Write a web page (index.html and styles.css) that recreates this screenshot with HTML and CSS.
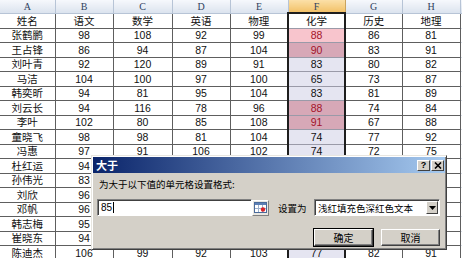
FILE: index.html
```html
<!DOCTYPE html>
<html lang="zh-CN">
<head>
  <meta charset="UTF-8" />
  <title>条件格式 - 大于</title>
  <link rel="stylesheet" href="styles.css">
</head>
<body>

  <table class="sheet">
    <colgroup>
      <col class="w-a"><col class="w-b"><col class="w-c"><col class="w-d"><col class="w-e"><col class="w-f"><col class="w-g"><col class="w-h"><col class="w-i">
    </colgroup>
    <tr class="cols"><th>A</th><th>B</th><th>C</th><th>D</th><th>E</th><th class="on">F</th><th>G</th><th>H</th><th></th></tr>
    <tr><td>姓名</td><td>语文</td><td>数学</td><td>英语</td><td>物理</td><td class="f top">化学</td><td>历史</td><td>地理</td><td class="x"></td></tr>
    <tr><td>张鹤鹏</td><td>98</td><td>108</td><td>92</td><td>99</td><td class="f hi first">88</td><td>86</td><td>81</td><td class="x"></td></tr>
    <tr><td>王占锋</td><td>86</td><td>94</td><td>87</td><td>104</td><td class="f hi">90</td><td>83</td><td>91</td><td class="x"></td></tr>
    <tr><td>刘叶青</td><td>92</td><td>120</td><td>89</td><td>91</td><td class="f">83</td><td>80</td><td>82</td><td class="x"></td></tr>
    <tr><td>马洁</td><td>104</td><td>100</td><td>97</td><td>100</td><td class="f">65</td><td>73</td><td>87</td><td class="x"></td></tr>
    <tr><td>韩奕昕</td><td>94</td><td>81</td><td>95</td><td>104</td><td class="f">83</td><td>81</td><td>89</td><td class="x"></td></tr>
    <tr><td>刘云长</td><td>94</td><td>116</td><td>78</td><td>96</td><td class="f hi">88</td><td>74</td><td>84</td><td class="x"></td></tr>
    <tr><td>李叶</td><td>102</td><td>80</td><td>85</td><td>108</td><td class="f hi">91</td><td>67</td><td>88</td><td class="x"></td></tr>
    <tr><td>童晓飞</td><td>98</td><td>98</td><td>81</td><td>104</td><td class="f">74</td><td>77</td><td>92</td><td class="x"></td></tr>
    <tr><td>冯惠</td><td>97</td><td>91</td><td>106</td><td>102</td><td class="f">74</td><td>72</td><td>75</td><td class="x"></td></tr>
    <tr><td>杜红运</td><td>94</td><td></td><td></td><td></td><td class="f"></td><td></td><td></td><td class="x"></td></tr>
    <tr><td>孙伟光</td><td>83</td><td></td><td></td><td></td><td class="f"></td><td></td><td></td><td class="x"></td></tr>
    <tr><td>刘欣</td><td>96</td><td></td><td></td><td></td><td class="f"></td><td></td><td></td><td class="x"></td></tr>
    <tr><td>邓帆</td><td>96</td><td></td><td></td><td></td><td class="f"></td><td></td><td></td><td class="x"></td></tr>
    <tr><td>韩志梅</td><td>95</td><td></td><td></td><td></td><td class="f"></td><td></td><td></td><td class="x"></td></tr>
    <tr><td>崔晓东</td><td>94</td><td></td><td></td><td></td><td class="f"></td><td></td><td></td><td class="x"></td></tr>
    <tr><td>陈迪杰</td><td>106</td><td>99</td><td>92</td><td>103</td><td class="f">77</td><td>82</td><td>91</td><td class="x"></td></tr>
  </table>

  <div class="dlg">
    <div class="dlg-title">
      <span>大于</span>
      <div class="tbtns">
        <span class="tbtn">?</span>
        <span class="tbtn">
          <svg width="8" height="7" viewBox="0 0 8 7"><path d="M1 0.5 L7 6.5 M7 0.5 L1 6.5" stroke="#000" stroke-width="1.6"/></svg>
        </span>
      </div>
    </div>

    <div class="dlg-body">
      <p class="dlg-label">为大于以下值的单元格设置格式:</p>

      <div class="dlg-row">
        <div class="field"><span>85</span><i class="caret"></i></div>
        <span class="refbtn">
          <svg width="13" height="11" viewBox="0 0 13 11">
            <rect x="0.5" y="0.5" width="12" height="10" fill="#fff" stroke="#4a6a9a"/>
            <rect x="1" y="1" width="11" height="2" fill="#5b7fb5"/>
            <path d="M4.5 3 V10 M8.5 3 V10 M1 6.5 H12" stroke="#9db0cc"/>
            <circle cx="9" cy="7.5" r="2.2" fill="#d8232a"/>
          </svg>
        </span>
        <span class="set-label">设置为</span>
        <div class="combo">
          <span>浅红填充色深红色文本</span>
          <span class="drop">
            <svg width="7" height="4" viewBox="0 0 7 4"><path d="M0 0 H7 L3.5 4 Z" fill="#000"/></svg>
          </span>
        </div>
      </div>

      <div class="dlg-btns">
        <button class="btn def">确定</button>
        <button class="btn">取消</button>
      </div>
    </div>
  </div>

</body>
</html>
```

FILE: styles.css
```css
* {
  box-sizing: border-box;
}
body {
  margin: 0;
  width: 462px;
  height: 258px;
  overflow: hidden;
  position: relative;
  background: #fff;
  font-family: "Liberation Sans", "Noto Sans CJK SC", sans-serif;
}

/* 表格 */
.sheet {
  border-collapse: collapse;
  table-layout: fixed;
  width: 462px;
}
.w-a { width: 55px; }
.w-b { width: 58px; }
.w-c { width: 59px; }
.w-d { width: 58px; }
.w-e { width: 58px; }
.w-f { width: 57px; }
.w-g { width: 57px; }
.w-h { width: 58px; }
.w-i { width: 2px; }

.sheet tr { height: 15px; }
.sheet tr:nth-child(odd) { height: 14px; }
.sheet tr.cols { height: 13px; }

.sheet th {
  padding: 0;
  font: normal 10px "Liberation Serif", serif;
  color: #2f4160;
  background: linear-gradient(#f6f8fc, #dbe3ee);
  border: 1px solid #b7c4d6;
  border-top: none;
}
.sheet th:first-child { border-left: none; }
.sheet th.on {
  background: linear-gradient(#fbe0a8, #f2c168);
  border-color: #c9a35e;
}
.sheet td {
  padding: 0;
  text-align: center;
  font-size: 10.5px;
  line-height: 12px;
  color: #111;
  border: 1px solid #5e5e5e;
  white-space: nowrap;
  overflow: hidden;
}
.sheet td:first-child { border-left: none; }
.sheet td.x {
  border-top-color: #d6dde8;
  border-bottom-color: #d6dde8;
  border-right: none;
}
.sheet td.f {
  background: #e5e5f1;
  border-left: 2px solid #1e1e1e;
  border-right: 2px solid #1e1e1e;
  border-top-color: #9a9aa8;
  border-bottom-color: #9a9aa8;
}
.sheet td.f.top {
  background: #fff;
  border-top: 2px solid #1e1e1e;
}
.sheet td.hi {
  background: #d7a8b7;
  color: #a3132a;
}
.sheet td.hi.first { background: #f8c5cd; }

/* 对话框 */
.dlg {
  position: absolute;
  left: 91px;
  top: 155px;
  width: 356px;
  height: 95px;
  padding: 1px;
  background: #d4d0c8;
  border: 1px solid;
  border-color: #e8e6e0 #404040 #404040 #e8e6e0;
  box-shadow: inset 1px 1px #fff, inset -1px -1px #808080;
  font: 9.5px "Noto Sans CJK SC", sans-serif;
  color: #000;
}
.dlg-title {
  height: 16px;
  display: flex;
  align-items: center;
  justify-content: space-between;
  padding: 0 1px 0 3px;
  background: linear-gradient(to right, #0a246a, #a6caf0);
  color: #fff;
  font-weight: bold;
  font-size: 11px;
  line-height: 14px;
}
.tbtns {
  display: flex;
  gap: 1px;
}
.tbtn {
  width: 13px;
  height: 11px;
  display: flex;
  align-items: center;
  justify-content: center;
  background: #d4d0c8;
  border: 1px solid;
  border-color: #fff #404040 #404040 #fff;
  color: #000;
  font: bold 9px/9px "Liberation Sans", sans-serif;
}
.dlg-body {
  padding: 0 5px 0 4px;
}
.dlg-label {
  margin: 5px 0 0 2px;
  line-height: 12px;
}
.dlg-row {
  display: flex;
  align-items: center;
  margin-top: 9px;
  height: 17px;
  line-height: 12px;
}
.field {
  width: 155px;
  height: 17px;
  display: flex;
  align-items: center;
  padding-left: 3px;
  background: #fff;
  border: 1px solid;
  border-color: #808080 #fff #fff #808080;
  box-shadow: inset 1px 1px #404040;
  font: 10px "Liberation Sans", sans-serif;
}
.caret {
  width: 1px;
  height: 11px;
  background: #000;
  margin-left: 1px;
}
.refbtn {
  width: 17px;
  height: 16px;
  display: flex;
  align-items: center;
  justify-content: center;
  background: #e9e7e2;
  border: 1px solid;
  border-color: #fff #808080 #808080 #fff;
}
.set-label {
  margin-left: 9px;
}
.combo {
  width: 126px;
  height: 17px;
  margin-left: auto;
  display: flex;
  align-items: center;
  justify-content: space-between;
  padding: 0 1px 0 3px;
  background: #fff;
  border: 1px solid;
  border-color: #808080 #fff #fff #808080;
  box-shadow: inset 1px 1px #404040;
}
.drop {
  width: 12px;
  height: 13px;
  display: flex;
  align-items: center;
  justify-content: center;
  background: #d4d0c8;
  border: 1px solid;
  border-color: #fff #404040 #404040 #fff;
}
.dlg-btns {
  display: flex;
  justify-content: flex-end;
  gap: 8px;
  margin-top: 13px;
}
.btn {
  width: 59px;
  height: 17px;
  padding: 0;
  background: #d4d0c8;
  border: 1px solid;
  border-color: #fff #404040 #404040 #fff;
  box-shadow: inset -1px -1px #808080;
  font: 10px/12px "Noto Sans CJK SC", sans-serif;
  color: #000;
}
.btn.def {
  outline: 1px solid #000;
}
```
